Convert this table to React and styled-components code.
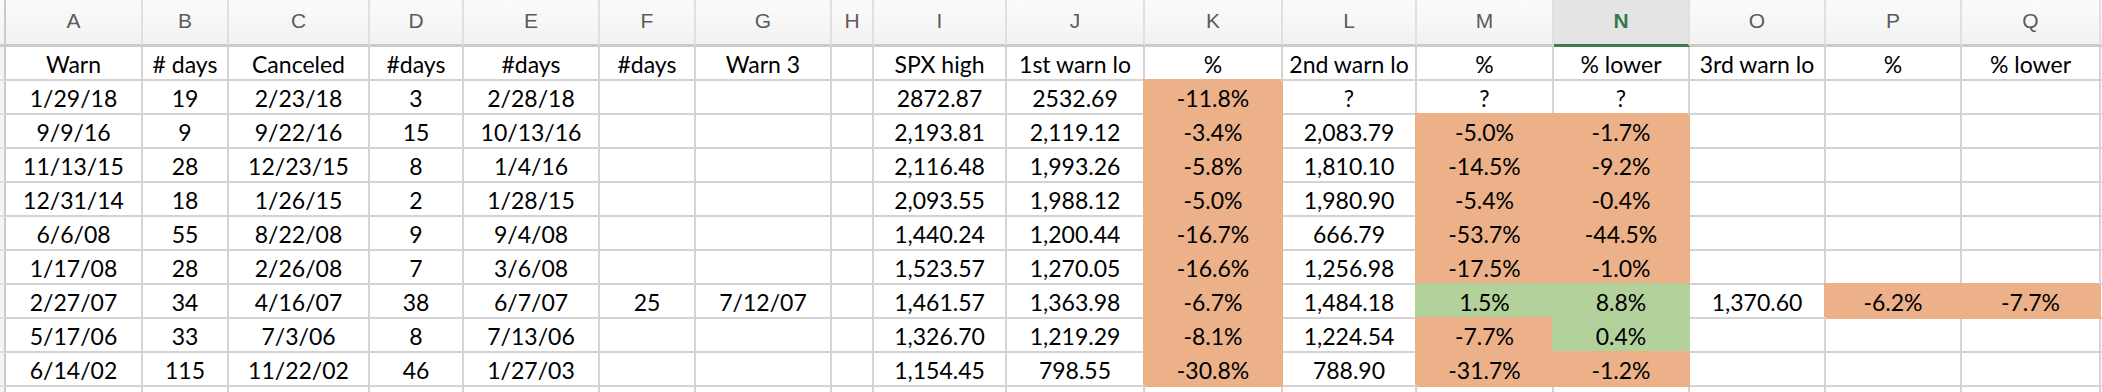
import React from 'react';
import styled, { createGlobalStyle, css } from 'styled-components';

const GlobalStyle = createGlobalStyle`
    html, body {
        margin: 0;
        padding: 0;
        background: #fff;
        overflow: hidden;
    }
`;

const ORANGE = '#ecb189';
const GREEN = '#b2d19b';
const GRID = '#d3d3d3';

// width of every column, stub first, boundaries read from the sheet
const widths = [6, 137, 86, 141, 94, 136, 96, 136, 42, 133, 138, 138, 134, 137, 136, 136, 136, 139];
const letters = ['A', 'B', 'C', 'D', 'E', 'F', 'G', 'H', 'I', 'J', 'K', 'L', 'M', 'N', 'O', 'P', 'Q'];

const o = v => ({ v, fill: ORANGE });
const g = v => ({ v, fill: GREEN });

const rows = [
    ['Warn', '# days', 'Canceled', '#days', '#days', '#days', 'Warn 3', '', 'SPX high', '1st warn lo', '%', '2nd warn lo', '%', '% lower', '3rd warn lo', '%', '% lower'],
    ['1/29/18', '19', '2/23/18', '3', '2/28/18', '', '', '', '2872.87', '2532.69', o('-11.8%'), '?', '?', '?', '', '', ''],
    ['9/9/16', '9', '9/22/16', '15', '10/13/16', '', '', '', '2,193.81', '2,119.12', o('-3.4%'), '2,083.79', o('-5.0%'), o('-1.7%'), '', '', ''],
    ['11/13/15', '28', '12/23/15', '8', '1/4/16', '', '', '', '2,116.48', '1,993.26', o('-5.8%'), '1,810.10', o('-14.5%'), o('-9.2%'), '', '', ''],
    ['12/31/14', '18', '1/26/15', '2', '1/28/15', '', '', '', '2,093.55', '1,988.12', o('-5.0%'), '1,980.90', o('-5.4%'), o('-0.4%'), '', '', ''],
    ['6/6/08', '55', '8/22/08', '9', '9/4/08', '', '', '', '1,440.24', '1,200.44', o('-16.7%'), '666.79', o('-53.7%'), o('-44.5%'), '', '', ''],
    ['1/17/08', '28', '2/26/08', '7', '3/6/08', '', '', '', '1,523.57', '1,270.05', o('-16.6%'), '1,256.98', o('-17.5%'), o('-1.0%'), '', '', ''],
    ['2/27/07', '34', '4/16/07', '38', '6/7/07', '25', '7/12/07', '', '1,461.57', '1,363.98', o('-6.7%'), '1,484.18', g('1.5%'), g('8.8%'), '1,370.60', o('-6.2%'), o('-7.7%')],
    ['5/17/06', '33', '7/3/06', '8', '7/13/06', '', '', '', '1,326.70', '1,219.29', o('-8.1%'), '1,224.54', o('-7.7%'), g('0.4%'), '', '', ''],
    ['6/14/02', '115', '11/22/02', '46', '1/27/03', '', '', '', '1,154.45', '798.55', o('-30.8%'), '788.90', o('-31.7%'), o('-1.2%'), '', '', ''],
    Array(17).fill(''),
];

const Sheet = styled.div`
    display: grid;
    grid-template-columns: ${widths.map(w => `${w}px`).join(' ')} 1fr;
    width: 2102px;
    height: 392px;
    overflow: hidden;
    align-content: start;
`;

const ColHead = styled.div`
    box-sizing: border-box;
    height: 47px;
    display: flex;
    align-items: center;
    justify-content: center;
    padding-bottom: 2px;
    background: ${p => p.$active ? '#e4e4e4' : 'linear-gradient(#fbfbfb, #f2f2f2)'};
    border-right: 2px solid #e0e0e0;
    border-bottom: 3px solid ${p => p.$active ? '#3f7b4d' : '#cbcbcb'};
    color: ${p => p.$active ? '#3b7848' : '#5b5b5b'};
    font-family: "Liberation Sans", Arial, sans-serif;
    font-size: 21px;
    font-weight: ${p => p.$active ? 700 : 400};
`;

const Corner = styled(ColHead)`
    background: linear-gradient(#fbfbfb, #f2f2f2);
    border-right: 2px solid #cbcbcb;
`;

const Stub = styled.div`
    box-sizing: border-box;
    height: 34px;
    background: #f4f4f4;
    border-right: 2px solid #cbcbcb;
    border-bottom: 2px solid #e0e0e0;
`;

const Cell = styled.div`
    box-sizing: border-box;
    height: 34px;
    display: flex;
    align-items: center;
    justify-content: center;
    padding-top: 2px;
    white-space: nowrap;
    background: #fff;
    border-right: 2px solid ${GRID};
    border-bottom: 2px solid ${GRID};
    color: #000;
    font-family: Lato, "Liberation Sans", sans-serif;
    font-size: 23px;

    ${p => p.$fill && css`
        background: ${p.$fill};
        border-color: ${p.$fill};
        box-shadow: -2px -2px 0 0 ${p.$fill};
    `}
`;

const Filler = styled.div`
    box-sizing: border-box;
    height: ${p => p.$head ? '47px' : '34px'};
    background: ${p => p.$head ? 'linear-gradient(#fbfbfb, #f2f2f2)' : '#fff'};
    border-bottom: ${p => p.$head ? '3px solid #cbcbcb' : `2px solid ${GRID}`};
`;

export default function App() {
    return (
        <>
            <GlobalStyle />
            <Sheet>
                <Corner />
                {letters.map(l => (
                    <ColHead key={l} $active={l === 'N'}>{l}</ColHead>
                ))}
                <Filler $head />

                {rows.map((row, r) => (
                    <React.Fragment key={r}>
                        <Stub />
                        {row.map((c, i) => {
                            const cell = typeof c === 'string' ? { v: c } : c;
                            return <Cell key={i} $fill={cell.fill}>{cell.v}</Cell>;
                        })}
                        <Filler />
                    </React.Fragment>
                ))}
            </Sheet>
        </>
    );
}
